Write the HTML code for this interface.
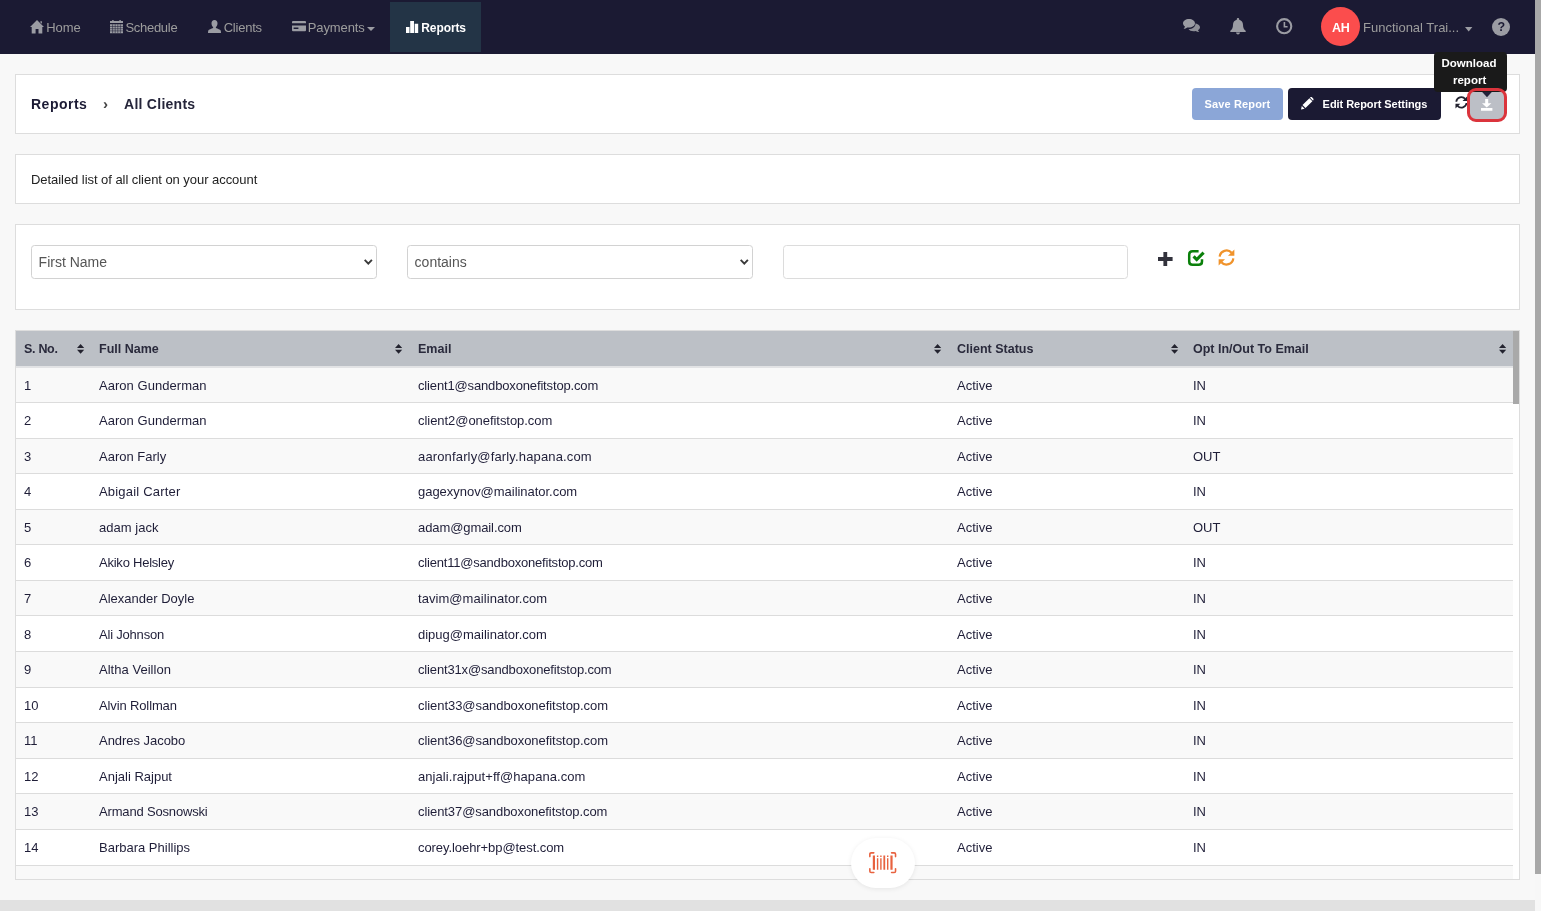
<!DOCTYPE html>
<html lang="en">
<head>
<meta charset="utf-8">
<title>Reports - All Clients</title>
<style>
*{box-sizing:border-box}
html,body{margin:0;padding:0}
body{width:1541px;height:911px;overflow:hidden;position:relative;background:#f8f8f8;font-family:"Liberation Sans",sans-serif;color:#1b1a34;font-size:13px}
.abs{position:absolute}
.t{position:absolute;white-space:nowrap;line-height:1}
svg{position:absolute;display:block;overflow:visible}
/* nav */
#nav{left:0;top:0;width:1541px;height:54px;background:#1b1a33}
#nav .t{color:#9d9d9d;font-size:13px}
#tab{left:390px;top:2px;width:91px;height:50px;background:#233446}
#avatar{left:1321px;top:7px;width:39px;height:39px;border-radius:50%;background:#fb4d4d}
/* cards */
.card{position:absolute;left:15px;width:1505px;background:#fff;border:1px solid #dddddd}
.btn{position:absolute;border-radius:4px}
.sel{position:absolute;top:245px;height:34px;width:346px;border:1px solid #d2d2d2;border-radius:3.5px;background:#fff}
.sel .t{font-size:14px;color:#555;left:6.6px;top:9.4px}
/* table */
#tbl{left:15px;top:330px;width:1505px;height:550px;border:1px solid #ddd;background:#fff;overflow:hidden}
#thead{left:0;top:0;width:1497px;height:37px;background:#bcc0c6;border-bottom:2px solid #e2e3e5;z-index:2}
#thead .t{font-weight:700;font-size:12.5px;color:#2a2a3c;top:11.7px}
#thead svg{top:12.6px}
.row{position:absolute;left:0;width:1497px;height:35.58px;border-bottom:1px solid #dcdcdc;background:#fff}
.row.o{background:#f9f9f9}
.row .t{top:11.1px;font-size:13px;color:#1f1e38}
.c1{left:8px}.c2{left:83px}.c3{left:402px}.c4{left:941px}.c5{left:1177px}
</style>
</head>
<body>
<div id="wrap" style="position:absolute;left:0;top:0;width:1541px;height:911px;will-change:transform">

<!-- NAVBAR -->
<div id="nav" class="abs">
  <div id="tab" class="abs"></div>
  <span class="t" id="n1" style="left:46.3px;top:21px;letter-spacing:-0.1px">Home</span>
  <span class="t" id="n2" style="left:125.5px;top:21px;letter-spacing:-0.3px">Schedule</span>
  <span class="t" id="n3" style="left:223.7px;top:21px;letter-spacing:-0.23px">Clients</span>
  <span class="t" id="n4" style="left:307.8px;top:21px;letter-spacing:-0.12px">Payments</span>
  <span class="t" id="n5" style="left:421.3px;top:21.8px;font-size:12px;letter-spacing:-0.1px;color:#fff;font-weight:700">Reports</span>
  <div id="avatar" class="abs"></div>
  <span class="t" id="n6" style="left:1332px;top:21.6px;font-size:12.5px;letter-spacing:-0.3px;color:#fff;font-weight:700">AH</span>
  <span class="t" id="n7" style="left:1363px;top:21px">Functional Trai...</span>
</div>

<!-- TITLE CARD -->
<div class="card" style="top:74px;height:60px"></div>
<span class="t" id="h1" style="left:31px;top:96.6px;letter-spacing:0.5px;font-size:14px;font-weight:700">Reports</span>
<span class="t" id="h2" style="left:103px;top:96px;font-size:15px;font-weight:700;color:#444">›</span>
<span class="t" id="h3" style="left:124px;top:96.6px;letter-spacing:0.27px;font-size:14px;font-weight:700;color:#25253a">All Clients</span>

<div class="btn" style="left:1192px;top:88px;width:91px;height:32px;background:#8ba6d7"></div>
<span class="t" id="b1" style="left:1204.6px;top:98.7px;letter-spacing:0.13px;font-size:11px;font-weight:700;color:#fff">Save Report</span>
<div class="btn" style="left:1288px;top:88px;width:153px;height:32px;background:#1b1a33"></div>
<span class="t" id="b2" style="left:1322.6px;top:98.7px;letter-spacing:-0.05px;font-size:11px;font-weight:700;color:#fff">Edit Report Settings</span>

<!-- download button w/ highlight -->
<div class="abs" style="left:1468px;top:89px;width:38px;height:32px;border-radius:8px;background:#bcbfc6"></div>

<!-- tooltip -->
<div class="abs" style="left:1434px;top:52px;width:73px;height:40px;background:#1a1a1a;border-radius:4px"></div>
<span class="t" id="tt1" style="left:1441.5px;top:58.2px;font-size:11.5px;font-weight:700;color:#fff">Download</span>
<span class="t" id="tt2" style="left:1453px;top:75px;font-size:11.5px;font-weight:700;color:#fff">report</span>

<!-- DESCRIPTION CARD -->
<div class="card" style="top:154px;height:50px"></div>
<span class="t" id="d1" style="left:31px;top:173px;font-size:13px;color:#222;letter-spacing:-0.05px">Detailed list of all client on your account</span>

<!-- FILTER CARD -->
<div class="card" style="top:224px;height:86px"></div>
<div class="sel" style="left:31px"><span class="t" id="s1">First Name</span></div>
<div class="sel" style="left:407px"><span class="t" id="s2">contains</span></div>
<div class="sel" style="left:783px;width:345px;border-color:#dcdcdc"></div>

<!-- TABLE -->
<div id="tbl" class="abs">
  <div id="thead" class="abs">
    <span class="t c1" id="th1" style="letter-spacing:-0.3px">S. No.</span>
    <span class="t c2" id="th2">Full Name</span>
    <span class="t c3" id="th3">Email</span>
    <span class="t c4" id="th4">Client Status</span>
    <span class="t c5" id="th5">Opt In/Out To Email</span>
    <svg style="left:60.8px" width="7.2" height="9.8" viewBox="0 0 7.2 9.8"><path fill="#23232f" d="M3.6 0 L7.2 4.1 H0Z M0 5.7 H7.2 L3.6 9.8Z"/></svg>
    <svg style="left:379px" width="7.2" height="9.8" viewBox="0 0 7.2 9.8"><path fill="#23232f" d="M3.6 0 L7.2 4.1 H0Z M0 5.7 H7.2 L3.6 9.8Z"/></svg>
    <svg style="left:918px" width="7.2" height="9.8" viewBox="0 0 7.2 9.8"><path fill="#23232f" d="M3.6 0 L7.2 4.1 H0Z M0 5.7 H7.2 L3.6 9.8Z"/></svg>
    <svg style="left:1154.8px" width="7.2" height="9.8" viewBox="0 0 7.2 9.8"><path fill="#23232f" d="M3.6 0 L7.2 4.1 H0Z M0 5.7 H7.2 L3.6 9.8Z"/></svg>
    <svg style="left:1482.8px" width="7.2" height="9.8" viewBox="0 0 7.2 9.8"><path fill="#23232f" d="M3.6 0 L7.2 4.1 H0Z M0 5.7 H7.2 L3.6 9.8Z"/></svg>
  </div>
  <div id="rows">
    <div class="row o" style="top:36.43px"><span class="t c1">1</span><span class="t c2" style="letter-spacing:0.04px">Aaron Gunderman</span><span class="t c3" style="letter-spacing:-0.15px">client1@sandboxonefitstop.com</span><span class="t c4">Active</span><span class="t c5">IN</span></div>
    <div class="row" style="top:72.01px"><span class="t c1">2</span><span class="t c2" style="letter-spacing:0.04px">Aaron Gunderman</span><span class="t c3" style="letter-spacing:-0.05px">client2@onefitstop.com</span><span class="t c4">Active</span><span class="t c5">IN</span></div>
    <div class="row o" style="top:107.59px"><span class="t c1">3</span><span class="t c2">Aaron Farly</span><span class="t c3" style="letter-spacing:0.15px">aaronfarly@farly.hapana.com</span><span class="t c4">Active</span><span class="t c5">OUT</span></div>
    <div class="row" style="top:143.17px"><span class="t c1">4</span><span class="t c2" style="letter-spacing:0.19px">Abigail Carter</span><span class="t c3" style="letter-spacing:-0.03px">gagexynov@mailinator.com</span><span class="t c4">Active</span><span class="t c5">IN</span></div>
    <div class="row o" style="top:178.75px"><span class="t c1">5</span><span class="t c2" style="letter-spacing:0.03px">adam jack</span><span class="t c3" style="letter-spacing:-0.09px">adam@gmail.com</span><span class="t c4">Active</span><span class="t c5">OUT</span></div>
    <div class="row" style="top:214.33px"><span class="t c1">6</span><span class="t c2" style="letter-spacing:-0.23px">Akiko Helsley</span><span class="t c3" style="letter-spacing:-0.20px">client11@sandboxonefitstop.com</span><span class="t c4">Active</span><span class="t c5">IN</span></div>
    <div class="row o" style="top:249.91px"><span class="t c1">7</span><span class="t c2">Alexander Doyle</span><span class="t c3" style="letter-spacing:0.06px">tavim@mailinator.com</span><span class="t c4">Active</span><span class="t c5">IN</span></div>
    <div class="row" style="top:285.49px"><span class="t c1">8</span><span class="t c2" style="letter-spacing:-0.20px">Ali Johnson</span><span class="t c3">dipug@mailinator.com</span><span class="t c4">Active</span><span class="t c5">IN</span></div>
    <div class="row o" style="top:321.07px"><span class="t c1">9</span><span class="t c2" style="letter-spacing:0.03px">Altha Veillon</span><span class="t c3" style="letter-spacing:-0.15px">client31x@sandboxonefitstop.com</span><span class="t c4">Active</span><span class="t c5">IN</span></div>
    <div class="row" style="top:356.65px"><span class="t c1">10</span><span class="t c2" style="letter-spacing:-0.13px">Alvin Rollman</span><span class="t c3" style="letter-spacing:-0.06px">client33@sandboxonefitstop.com</span><span class="t c4">Active</span><span class="t c5">IN</span></div>
    <div class="row o" style="top:392.23px"><span class="t c1">11</span><span class="t c2" style="letter-spacing:-0.04px">Andres Jacobo</span><span class="t c3" style="letter-spacing:-0.06px">client36@sandboxonefitstop.com</span><span class="t c4">Active</span><span class="t c5">IN</span></div>
    <div class="row" style="top:427.81px"><span class="t c1">12</span><span class="t c2">Anjali Rajput</span><span class="t c3" style="letter-spacing:0.06px">anjali.rajput+ff@hapana.com</span><span class="t c4">Active</span><span class="t c5">IN</span></div>
    <div class="row o" style="top:463.39px"><span class="t c1">13</span><span class="t c2" style="letter-spacing:-0.17px">Armand Sosnowski</span><span class="t c3" style="letter-spacing:-0.08px">client37@sandboxonefitstop.com</span><span class="t c4">Active</span><span class="t c5">IN</span></div>
    <div class="row" style="top:498.97px"><span class="t c1">14</span><span class="t c2">Barbara Phillips</span><span class="t c3" style="letter-spacing:-0.07px">corey.loehr+bp@test.com</span><span class="t c4">Active</span><span class="t c5">IN</span></div>
    <div class="row o" style="top:534.55px"><span class="t c1">15</span><span class="t c2">Barry Allen</span><span class="t c3">client40@sandboxonefitstop.com</span><span class="t c4">Active</span><span class="t c5">IN</span></div>
  </div>
  <!-- /rows -->
</div>

<!-- ICONS -->
<!-- home -->
<svg style="left:30px;top:19.7px" width="14" height="13.4" viewBox="0 0 14 13.4"><path fill="#9b9ca3" d="M7 0 L14 6.9 H12.3 V13.4 H8.5 V9 H5.6 V13.4 H1.7 V6.9 H0 Z M10.4 1.3 H11.9 V3.8 L10.4 2.4 Z"/></svg>
<!-- calendar -->
<svg style="left:110px;top:20px" width="13" height="13.2" viewBox="0 0 13 13.2"><path fill="#9b9ca3" d="M0 1 H13 V3 H0Z M2.2 0 H3.6 V1.4 H2.2Z M9.4 0 H10.8 V1.4 H9.4Z M0 4.2 H13 V13.2 H0Z"/><path stroke="#1b1a33" stroke-opacity="0.75" stroke-width="0.7" fill="none" d="M2.6 4.2 V13.2 M5.2 4.2 V13.2 M7.8 4.2 V13.2 M10.4 4.2 V13.2 M0 6.5 H13 M0 8.7 H13 M0 10.9 H13"/></svg>
<!-- user -->
<svg style="left:208px;top:20px" width="13" height="13" viewBox="0 0 13 13"><path fill="#9b9ca3" d="M6.5 0 C8.4 0 9.5 1.4 9.5 3.3 C9.5 5 8.8 6.4 7.9 7.1 V7.9 C9.6 8.6 12.2 9.4 12.7 10.6 C12.95 11.3 13 12.2 13 13 H0 C0 12.2 0.05 11.3 0.3 10.6 C0.8 9.4 3.4 8.6 5.1 7.9 V7.1 C4.2 6.4 3.5 5 3.5 3.3 C3.5 1.4 4.6 0 6.5 0Z"/></svg>
<!-- credit card -->
<svg style="left:292px;top:21px" width="14" height="10.2" viewBox="0 0 14 10.2"><path fill="#9b9ca3" d="M1 0 H13 Q14 0 14 1 V9.2 Q14 10.2 13 10.2 H1 Q0 10.2 0 9.2 V1 Q0 0 1 0Z"/><path fill="#1b1a33" d="M0 2.2 H14 V4.4 H0Z M1.6 6.6 H6.4 V8 H1.6Z"/></svg>
<!-- payments caret -->
<svg style="left:367px;top:27.3px" width="8" height="4" viewBox="0 0 8 4"><path fill="#9b9ca3" d="M0 0 H8 L4 4Z"/></svg>
<!-- stats -->
<svg style="left:406px;top:21px" width="12.2" height="12.1" viewBox="0 0 12.2 12.1"><path fill="#fff" d="M0 5.9 H3.5 V12.1 H0Z M4.2 0 H8 V12.1 H4.2Z M8.7 2.8 H12.2 V12.1 H8.7Z"/></svg>
<!-- comments -->
<svg style="left:1183px;top:19px" width="17" height="13" viewBox="0 0 17 13"><path fill="#8e8f97" d="M10.5 4.2 C14 4.2 17 6 17 8.3 C17 9.5 16.2 10.5 15 11.2 C15.2 11.9 15.7 12.5 16.3 13 C15 13 13.8 12.5 12.9 11.9 C12.2 12.1 11.4 12.2 10.5 12.2 C8.3 12.2 6.4 11.4 5.5 10.2 C9.5 10.2 12.5 7.8 12.5 4.5 C11.9 4.3 11.2 4.2 10.5 4.2Z"/><path fill="#9b9ca3" d="M6 0 C9.3 0 12 1.9 12 4.3 C12 6.7 9.3 8.6 6 8.6 C5.4 8.6 4.8 8.5 4.2 8.4 C3.3 9.1 2 9.7 0.6 9.7 C1.2 9.2 1.8 8.5 2 7.6 C0.8 6.8 0 5.6 0 4.3 C0 1.9 2.7 0 6 0Z"/></svg>
<!-- bell -->
<svg style="left:1229.6px;top:17.5px" width="16" height="16.5" viewBox="0 0 16 16.5"><path fill="#9b9ca3" d="M8 0 C8.7 0 9.2 0.5 9.2 1.2 V1.7 C11.6 2.3 13 4.3 13 6.8 C13 10 14 11.6 15.6 12.8 C16 13.1 16 14 15.2 14 H0.8 C0 14 0 13.1 0.4 12.8 C2 11.6 3 10 3 6.8 C3 4.3 4.4 2.3 6.8 1.7 V1.2 C6.8 0.5 7.3 0 8 0Z M6 14.6 H10 C10 15.7 9.1 16.5 8 16.5 C6.9 16.5 6 15.7 6 14.6Z"/></svg>
<!-- clock -->
<svg style="left:1275.5px;top:17.8px" width="16.4" height="16.4" viewBox="0 0 16.4 16.4"><circle cx="8.2" cy="8.2" r="7.1" fill="none" stroke="#9b9ca3" stroke-width="2.1"/><path fill="none" stroke="#9b9ca3" stroke-width="1.6" d="M8.4 4 V8.8 H11.6"/></svg>
<!-- user caret -->
<svg style="left:1464.6px;top:26.6px" width="7.4" height="4.6" viewBox="0 0 7.4 4.6"><path fill="#9b9ca3" d="M0 0 H7.4 L3.7 4.6Z"/></svg>
<!-- help -->
<div class="abs" style="left:1492px;top:18px;width:18px;height:18px;border-radius:50%;background:#9b9ca3"></div>
<span class="t" id="q" style="left:1497.6px;top:20.8px;font-size:12.5px;font-weight:700;color:#1b1a33">?</span>
<!-- pencil -->
<svg style="left:1300.8px;top:96.8px" width="12.6" height="12.6" viewBox="0 0 12.6 12.6"><path fill="#fff" d="M0 12.6 L0.8 9 L3.6 11.8Z M1.5 8.1 L8.4 1.2 L11.4 4.2 L4.5 11.1Z M9.2 0.5 C9.8 -0.1 10.6 -0.1 11.2 0.4 L12.2 1.4 C12.7 2 12.7 2.8 12.1 3.4 L11.9 3.6 L9 0.7Z"/></svg>
<!-- refresh dark -->
<svg style="left:1454.6px;top:96px" width="12.8" height="12.8" viewBox="0 0 16 16"><g fill="none" stroke="#22222f" stroke-width="2.2"><path d="M1.6 7.2 A6.4 6.4 0 0 1 12.8 3.6"/><path d="M14.4 8.8 A6.4 6.4 0 0 1 3.2 12.4"/></g><path fill="#22222f" d="M15.4 0.4 V6.4 H9.4Z M0.6 15.6 V9.6 H6.6Z"/></svg>
<!-- tooltip arrow -->
<svg style="left:1482px;top:91.6px" width="10" height="5.2" viewBox="0 0 10 5.4"><path fill="#23233a" d="M0 0 H10 L5 5.4Z"/></svg>
<!-- download -->
<svg style="left:1481px;top:99.2px" width="11.4" height="11.8" viewBox="0 0 11.4 11.8"><path fill="#fff" d="M4.2 0 H7.2 V4.2 H10.4 L5.7 8.6 L1 4.2 H4.2Z M0 9.1 H11.4 V11.8 H0Z"/></svg>
<!-- select chevrons -->
<svg style="left:363.5px;top:258.8px" width="8.6" height="6.4" viewBox="0 0 8.6 6.4"><path fill="none" stroke="#3a3a3a" stroke-width="1.9" d="M0.7 0.9 L4.3 4.7 L7.9 0.9"/></svg>
<svg style="left:739.5px;top:258.8px" width="8.6" height="6.4" viewBox="0 0 8.6 6.4"><path fill="none" stroke="#3a3a3a" stroke-width="1.9" d="M0.7 0.9 L4.3 4.7 L7.9 0.9"/></svg>
<!-- plus -->
<svg style="left:1158.3px;top:252px" width="14.6" height="14" viewBox="0 0 14.6 14"><path fill="#32323c" d="M5.4 0 H9.2 V5.1 H14.6 V8.9 H9.2 V14 H5.4 V8.9 H0 V5.1 H5.4Z"/></svg>
<!-- check-square green -->
<svg style="left:1188px;top:250px" width="17" height="16" viewBox="0 0 17 16"><path fill="none" stroke="#0a800a" stroke-width="2.5" d="M10.6 1.3 H4.6 Q1.2 1.3 1.2 4.7 V11.4 Q1.2 14.8 4.6 14.8 H10.6 Q14 14.8 14 11.4 V9.2"/><path fill="none" stroke="#0a800a" stroke-width="3.1" d="M5.6 6.4 L8.7 9.5 L15.6 2.6"/></svg>
<!-- refresh orange -->
<svg style="left:1218.4px;top:249px" width="17" height="17" viewBox="0 0 16 16"><g fill="none" stroke="#f0932b" stroke-width="2.1"><path d="M1.6 7.2 A6.4 6.4 0 0 1 12.8 3.6"/><path d="M14.4 8.8 A6.4 6.4 0 0 1 3.2 12.4"/></g><path fill="#f0932b" d="M15.4 0.4 V6.4 H9.4Z M0.6 15.6 V9.6 H6.6Z"/></svg>

<div class="abs" style="left:1467px;top:88px;width:40px;height:34px;border:3px solid #db343c;border-radius:9px"></div>
<!-- inner table scrollbar -->
<div class="abs" style="left:1513px;top:331px;width:6px;height:73px;background:#a9a9a9"></div>
<!-- floating barcode button -->
<div class="abs" style="left:851px;top:838px;width:64px;height:50px;border-radius:25px;background:#fff;box-shadow:0 1px 5px rgba(0,0,0,0.08)"></div>
<svg style="left:869.4px;top:852.2px" width="27.4" height="21.4" viewBox="0 0 27.4 21.4"><g fill="none" stroke="#e8623f" stroke-width="1.6" stroke-linejoin="round" stroke-linecap="round"><path d="M0.85 4.6 V2.2 Q0.85 0.85 2.2 0.85 H4.8"/><path d="M22.6 0.85 H25.2 Q26.55 0.85 26.55 2.2 V4.6"/><path d="M0.85 16.8 V19.2 Q0.85 20.55 2.2 20.55 H4.8"/><path d="M22.6 20.55 H25.2 Q26.55 20.55 26.55 19.2 V16.8"/></g><path fill="#e8623f" d="M3.8 3.6 H6 V17.8 H3.8Z M7.9 6.2 H9.3 V17.8 H7.9Z M11.2 6.2 H12.6 V17.8 H11.2Z M14.4 3.6 H16.2 V17.8 H14.4Z M18 6.2 H19.4 V17.8 H18Z M21.4 3.6 H23.6 V17.8 H21.4Z M7.9 3.6 H9.3 V5 H7.9Z M11.2 3.6 H12.6 V5 H11.2Z M18 3.6 H19.4 V5 H18Z"/></svg>
<!-- footer strip + scrollbars -->
<div class="abs" style="left:0;top:900px;width:1535px;height:11px;background:#e1e1e1"></div>
<div class="abs" style="left:1535px;top:0;width:6px;height:911px;background:#f7f7f7"></div>
<div class="abs" style="left:1535px;top:0;width:6px;height:874px;background:#a8a8a8"></div>

</div>
</body>
</html>
